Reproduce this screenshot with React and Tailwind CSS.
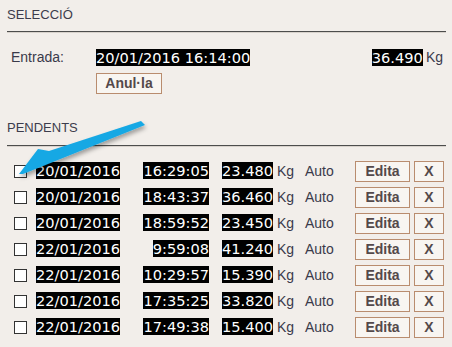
import React from "react";

const rows = [
  { date: "20/01/2016", time: "16:29:05", weight: "23.480" },
  { date: "20/01/2016", time: "18:43:37", weight: "36.460" },
  { date: "20/01/2016", time: "18:59:52", weight: "23.450" },
  { date: "22/01/2016", time: "9:59:08", weight: "41.240" },
  { date: "22/01/2016", time: "10:29:57", weight: "15.390" },
  { date: "22/01/2016", time: "17:35:25", weight: "33.820" },
  { date: "22/01/2016", time: "17:49:38", weight: "15.400" },
];

function Hl({ children }) {
  return (
    <span className="bg-black text-white font-['DejaVu_Sans',Verdana,sans-serif] text-[14.6px] leading-[17px] whitespace-pre">
      {children}
    </span>
  );
}

function Btn({ children, className = "" }) {
  return (
    <button
      className={
        "h-[21px] border border-[#b98c6e] bg-[#f8f5f1] text-[#54494a] font-bold text-[14px] leading-[19px] font-['Liberation_Sans',Arial,sans-serif] " +
        className
      }
    >
      {children}
    </button>
  );
}

export default function App() {
  return (
    <div className="relative w-[452px] h-[347px] bg-[#f2eeea] overflow-hidden font-['Liberation_Sans',Arial,sans-serif] text-[#3a3a4a]">
      <div className="ml-[7px] w-[439px]">
        {/* Selecció */}
        <div className="h-[32px] pt-[7px] border-b border-[#4d4d4d] shadow-[0_1px_0_#d8d2cc] text-[13px] leading-[16px] text-[#3c3c4c]">
          SELECCIÓ
        </div>

        <div className="mt-[17px] flex items-center h-[17px]">
          <div className="w-[89px] pl-[4px] text-[14px] leading-[17px]">Entrada:</div>
          <Hl>20/01/2016 16:14:00</Hl>
          <div className="ml-auto flex items-center">
            <Hl>36.490</Hl>
            <span className="ml-[3px] mr-[3px] text-[14px] leading-[17px]">Kg</span>
          </div>
        </div>

        <div className="mt-[5px] ml-[89px]">
          <Btn className="w-[66px]">Anul·la</Btn>
        </div>

        {/* Pendents */}
        <div className="mt-[25px] h-[26px] border-b border-[#4d4d4d] shadow-[0_1px_0_#d8d2cc] text-[13px] leading-[16px] text-[#3c3c4c]">
          PENDENTS
        </div>

        <div className="mt-[12px] flex flex-col">
          {rows.map((r, i) => (
            <div key={i} className="h-[26px] flex items-center">
              <span className="ml-[7px] w-[13px] h-[13px] border border-[#333] bg-white shrink-0" />
              <div className="ml-[9px] w-[107px]">
                <Hl>{r.date}</Hl>
              </div>
              <div className="w-[66px] text-right">
                <Hl>{r.time}</Hl>
              </div>
              <div className="ml-[13px] w-[50px] text-right">
                <Hl>{r.weight}</Hl>
              </div>
              <span className="ml-[5px] w-[28px] text-[14px] leading-[17px]">Kg</span>
              <span className="w-[50px] text-[14px] leading-[17px]">Auto</span>
              <Btn className="w-[55px] mt-[1px]">Edita</Btn>
              <Btn className="ml-[4px] w-[30px] mt-[1px]">X</Btn>
            </div>
          ))}
        </div>
      </div>

      {/* annotation arrow */}
      <svg className="absolute left-0 top-0 pointer-events-none" width="452" height="347" viewBox="0 0 452 347">
        <defs>
          <filter id="sh" x="-20%" y="-20%" width="140%" height="160%">
            <feDropShadow dx="1" dy="3" stdDeviation="2.2" floodColor="#000" floodOpacity="0.35" />
          </filter>
        </defs>
        <path
          d="M141 121 L145 125 L23 174 L19 174 L38 149 L49 151 Z"
          fill="#17a8e4"
          filter="url(#sh)"
        />
      </svg>
    </div>
  );
}
